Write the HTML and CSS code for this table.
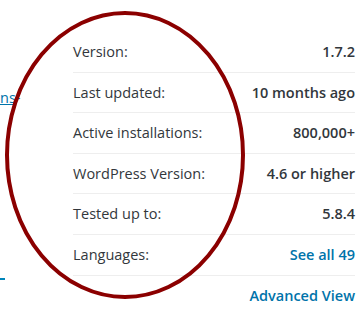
FILE: index.html
```html
<!DOCTYPE html>
<html>
<head>
<meta charset="utf-8">
<link rel="stylesheet" href="styles.css">
</head>
<body>
<div class="page">
  <div class="side">
    <div class="side-link"><a href="#" class="lnk">ns</a><span class="dash">-</span></div>
    <div class="side-rule"></div>
  </div>
  <div class="meta">
    <ul class="rows">
      <li class="row"><span class="lab">Version:</span><strong class="val">1.7.2</strong></li>
      <li class="row"><span class="lab">Last updated:</span><strong class="val">10 months ago</strong></li>
      <li class="row"><span class="lab">Active installations:</span><strong class="val">800,000+</strong></li>
      <li class="row"><span class="lab">WordPress Version:</span><strong class="val">4.6 or higher</strong></li>
      <li class="row"><span class="lab">Tested up to:</span><strong class="val">5.8.4</strong></li>
      <li class="row"><span class="lab">Languages:</span><a href="#" class="val link">See all 49</a></li>
    </ul>
    <div class="adv"><a href="#" class="link">Advanced View</a></div>
  </div>
</div>
<svg class="circle" width="363" height="327" viewBox="0 0 363 327">
  <ellipse cx="125" cy="155" rx="118" ry="142" fill="none" stroke="#8b0000" stroke-width="4"/>
</svg>
</body>
</html>
```
FILE: styles.css
```css
html, body {
  margin: 0;
  padding: 0;
  background: #fff;
}
body {
  width: 363px;
  height: 327px;
  overflow: hidden;
  position: relative;
  font-family: "Open Sans", "Noto Sans", sans-serif;
  font-size: 14.5px;
  color: #32373c;
}
.page {
  display: flex;
}
.side {
  width: 73px;
  flex: none;
  overflow: hidden;
}
.side-link {
  margin-top: 88px;
  line-height: 20px;
  color: #0073aa;
}
.lnk {
  color: #0073aa;
  text-decoration: underline;
}
.dash {
  color: #0073aa;
}
.side-rule {
  margin-top: 170px;
  width: 5px;
  height: 2px;
  background: #0085ba;
}
.meta {
  width: 282px;
  padding-top: 32px;
}
.rows {
  list-style: none;
  margin: 0;
  padding: 0;
}
.row {
  display: flex;
  justify-content: space-between;
  padding: 10px 0;
  line-height: 19.6px;
  border-bottom: 1px solid #eeeeee;
}
.val {
  font-weight: 600;
}
.link {
  color: #0073aa;
  text-decoration: none;
  font-weight: 600;
}
.adv {
  text-align: right;
  padding-top: 10px;
  line-height: 20px;
}
.circle {
  position: absolute;
  left: 0;
  top: 0;
  pointer-events: none;
}
```
